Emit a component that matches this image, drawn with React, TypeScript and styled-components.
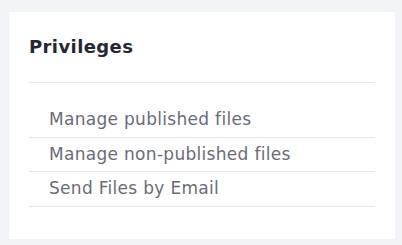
import React from "react";
import styled, { createGlobalStyle } from "styled-components";

const GlobalStyle = createGlobalStyle`
  html, body {
    margin: 0;
    padding: 0;
    background: #f3f4f8;
  }
  body {
    font-family: "DejaVu Sans", "Noto Sans", sans-serif;
  }
`;

const Page = styled.div`
  padding: 12px 7px 6px 9px;
`;

const Card = styled.section`
  background: #ffffff;
  height: 227px;
  box-sizing: border-box;
  padding: 21px 20px 0 20px;
`;

const Title = styled.h2`
  margin: 0;
  font-size: 18px;
  line-height: 28px;
  font-weight: 700;
  letter-spacing: 0.4px;
  color: #262633;
  padding-bottom: 21px;
  border-bottom: 1px solid #e6e6ee;
`;

const List = styled.ul`
  list-style: none;
  margin: 20px 0 0 0;
  padding: 0;
`;

const Row = styled.li`
  font-size: 17px;
  letter-spacing: 0.3px;
  line-height: 33.5px;
  color: #6b6b78;
  padding-left: 20px;
  border-bottom: 1px solid #e6e6ee;
`;

const privileges = [
  "Manage published files",
  "Manage non-published files",
  "Send Files by Email",
];

const App: React.FC = () => {
  return (
    <>
      <GlobalStyle />
      <Page>
        <Card>
          <Title>Privileges</Title>
          <List>
            {privileges.map((p) => (
              <Row key={p}>{p}</Row>
            ))}
          </List>
        </Card>
      </Page>
    </>
  );
};

export default App;
